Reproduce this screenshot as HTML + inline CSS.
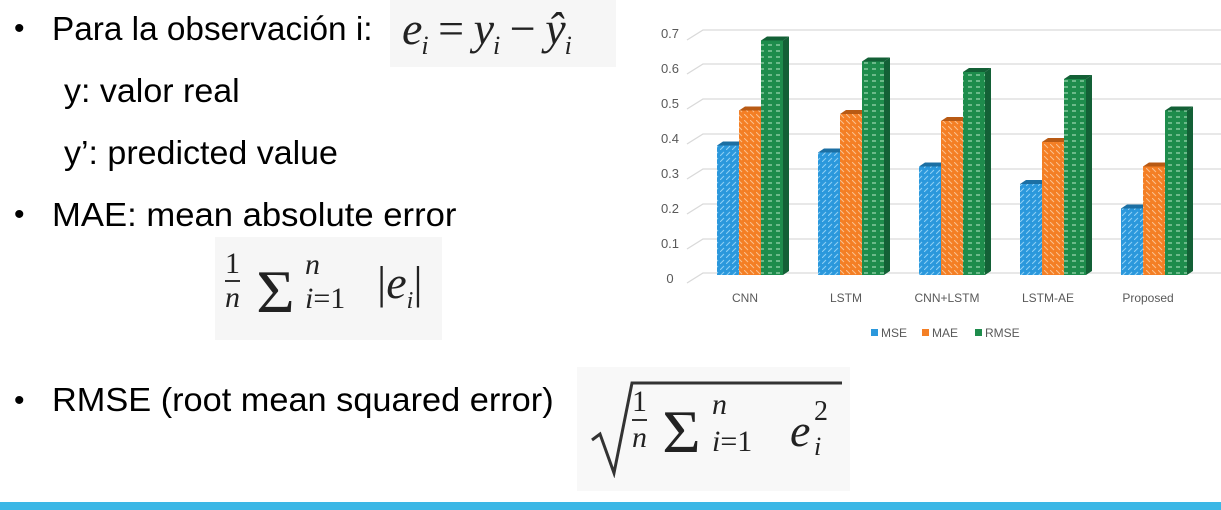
<!DOCTYPE html>
<html><head><meta charset="utf-8"><style>
body{margin:0;width:1221px;height:510px;background:#fff;position:relative;overflow:hidden;font-family:"Liberation Sans",sans-serif;color:#000}
.t{position:absolute;font-size:33px;white-space:nowrap;line-height:1;transform:scaleX(1.03);transform-origin:left top}
.b{position:absolute;font-size:30px;line-height:1}
.box{position:absolute;background:#f6f6f6}
.m{position:absolute;font-family:"Liberation Serif",serif;font-style:italic;white-space:nowrap;color:#222;line-height:1}
</style></head><body>
<div class="b" style="left:14px;top:14px">•</div>
<div class="t" style="left:52px;top:12px;transform:scaleX(1.01)">Para la observación i:</div>
<div class="t" style="left:64px;top:74px">y: valor real</div>
<div class="t" style="left:64px;top:136px">y’: predicted value</div>
<div class="b" style="left:14px;top:200px">•</div>
<div class="t" style="left:52px;top:198px;transform:scaleX(1.05)">MAE: mean absolute error</div>
<div class="b" style="left:14px;top:386px">•</div>
<div class="t" style="left:52px;top:383px;transform:scaleX(1.04)">RMSE (root mean squared error)</div>

<div class="box" style="left:390px;top:0;width:226px;height:67px"></div>
<div class="m" style="left:402px;top:6px;font-size:46px;letter-spacing:-1px">e<sub style="font-size:26px">i</sub> <span style="font-style:normal">=</span> y<sub style="font-size:26px">i</sub> <span style="font-style:normal">−</span> ŷ<sub style="font-size:26px">i</sub></div>

<div class="box" style="left:215px;top:237px;width:227px;height:103px"></div>
<div class="m" style="left:225px;top:248px;font-size:30px;text-align:center;line-height:32px;font-style:normal">1<br><span style="border-top:2px solid #333;display:inline-block;font-style:italic">n</span></div>
<div class="m" style="left:258px;top:262px;font-size:60px;font-style:normal;transform:scaleX(1.1)">Σ</div>
<div class="m" style="left:305px;top:250px;font-size:30px">n</div>
<div class="m" style="left:305px;top:284px;font-size:30px">i<span style="font-style:normal">=1</span></div>
<div class="m" style="left:377px;top:260px;font-size:46px"><span style="font-style:normal">|</span>e<sub style="font-size:24px">i</sub><span style="font-style:normal">|</span></div>

<div class="box" style="left:577px;top:367px;width:273px;height:124px;background:#f8f8f8"></div>
<svg style="position:absolute;left:590px;top:378px" width="260" height="100"><path d="M2 62 L10 56 L24 95 L42 5 L252 5" fill="none" stroke="#333" stroke-width="3"/></svg>
<div class="m" style="left:632px;top:385px;font-size:30px;text-align:center;line-height:34px;font-style:normal">1<br><span style="border-top:2px solid #333;display:inline-block;font-style:italic">n</span></div>
<div class="m" style="left:664px;top:402px;font-size:60px;font-style:normal;transform:scaleX(1.1)">Σ</div>
<div class="m" style="left:712px;top:390px;font-size:30px">n</div>
<div class="m" style="left:712px;top:427px;font-size:30px">i<span style="font-style:normal">=1</span></div>
<div class="m" style="left:790px;top:408px;font-size:46px">e</div>
<div class="m" style="left:814px;top:398px;font-size:28px;font-style:normal">2</div>
<div class="m" style="left:814px;top:434px;font-size:26px">i</div>

<svg style="position:absolute;left:630px;top:0" width="591" height="350">
<defs>
<pattern id="pb" width="6" height="6" patternUnits="userSpaceOnUse"><rect width="6" height="6" fill="#2b98dc"/><path d="M0 6 L4 2" stroke="#8fd0f5" stroke-width="1"/></pattern>
<pattern id="po" width="6" height="6" patternUnits="userSpaceOnUse"><rect width="6" height="6" fill="#f47f25"/><path d="M0 0 L4 4" stroke="#fbc08e" stroke-width="1"/></pattern>
<pattern id="pg" width="8" height="6" patternUnits="userSpaceOnUse"><rect width="8" height="6" fill="#1e8c4c"/><path d="M2 3 H6" stroke="#9fd9b4" stroke-width="1.2"/></pattern>
</defs>
<g stroke="#d9d9d9" stroke-width="1.3" fill="none">
<path d="M57 283 L73 273 H591"/><path d="M57 249 L73 239 H591"/><path d="M57 214 L73 204 H591"/><path d="M57 179 L73 169 H591"/><path d="M57 144 L73 134 H591"/><path d="M57 109 L73 99 H591"/><path d="M57 74 L73 64 H591"/><path d="M57 40 L73 30 H591"/>
</g>
<g font-family="Liberation Sans,sans-serif" font-size="13" fill="#595959" text-anchor="middle">
<text x="40" y="283">0</text><text x="40" y="248">0.1</text><text x="40" y="213">0.2</text><text x="40" y="178">0.3</text><text x="40" y="143">0.4</text><text x="40" y="108">0.5</text><text x="40" y="73">0.6</text><text x="40" y="38">0.7</text>
<text x="115" y="302" font-size="12">CNN</text><text x="216" y="302" font-size="12">LSTM</text><text x="317" y="302" font-size="12">CNN+LSTM</text><text x="418" y="302" font-size="12">LSTM-AE</text><text x="518" y="302" font-size="12">Proposed</text>
</g>
<rect x="87" y="145.5" width="22" height="129.5" fill="url(#pb)"/><polygon points="87,145.5 93,141.5 115,141.5 109,145.5" fill="#1c6fa3"/>
<rect x="109" y="110.5" width="22" height="164.5" fill="url(#po)"/><polygon points="109,110.5 115,106.5 137,106.5 131,110.5" fill="#b85a14"/>
<rect x="131" y="40.5" width="22" height="234.5" fill="url(#pg)"/><polygon points="131,40.5 137,36.5 159,36.5 153,40.5" fill="#136036"/><polygon points="153,40.5 159,36.5 159,271 153,275" fill="#136036"/>
<rect x="188" y="152.5" width="22" height="122.5" fill="url(#pb)"/><polygon points="188,152.5 194,148.5 216,148.5 210,152.5" fill="#1c6fa3"/>
<rect x="210" y="114" width="22" height="161" fill="url(#po)"/><polygon points="210,114 216,110 238,110 232,114" fill="#b85a14"/>
<rect x="232" y="61.5" width="22" height="213.5" fill="url(#pg)"/><polygon points="232,61.5 238,57.5 260,57.5 254,61.5" fill="#136036"/><polygon points="254,61.5 260,57.5 260,271 254,275" fill="#136036"/>
<rect x="289" y="166.5" width="22" height="108.5" fill="url(#pb)"/><polygon points="289,166.5 295,162.5 317,162.5 311,166.5" fill="#1c6fa3"/>
<rect x="311" y="121" width="22" height="154" fill="url(#po)"/><polygon points="311,121 317,117 339,117 333,121" fill="#b85a14"/>
<rect x="333" y="72" width="22" height="203" fill="url(#pg)"/><polygon points="333,72 339,68 361,68 355,72" fill="#136036"/><polygon points="355,72 361,68 361,271 355,275" fill="#136036"/>
<rect x="390" y="184" width="22" height="91" fill="url(#pb)"/><polygon points="390,184 396,180 418,180 412,184" fill="#1c6fa3"/>
<rect x="412" y="142" width="22" height="133" fill="url(#po)"/><polygon points="412,142 418,138 440,138 434,142" fill="#b85a14"/>
<rect x="434" y="79" width="22" height="196" fill="url(#pg)"/><polygon points="434,79 440,75 462,75 456,79" fill="#136036"/><polygon points="456,79 462,75 462,271 456,275" fill="#136036"/>
<rect x="491" y="208.5" width="22" height="66.5" fill="url(#pb)"/><polygon points="491,208.5 497,204.5 519,204.5 513,208.5" fill="#1c6fa3"/>
<rect x="513" y="166.5" width="22" height="108.5" fill="url(#po)"/><polygon points="513,166.5 519,162.5 541,162.5 535,166.5" fill="#b85a14"/>
<rect x="535" y="110.5" width="22" height="164.5" fill="url(#pg)"/><polygon points="535,110.5 541,106.5 563,106.5 557,110.5" fill="#136036"/><polygon points="557,110.5 563,106.5 563,271 557,275" fill="#136036"/>
<g font-family="Liberation Sans,sans-serif" font-size="12" fill="#595959">
<rect x="241" y="329" width="7" height="7" fill="#2b98dc"/><text x="251" y="337">MSE</text>
<rect x="292" y="329" width="7" height="7" fill="#f47f25"/><text x="302" y="337">MAE</text>
<rect x="345" y="329" width="7" height="7" fill="#1e8c4c"/><text x="355" y="337">RMSE</text>
</g>
</svg>
<div style="position:absolute;left:0;top:502px;width:1221px;height:8px;background:#3bb7e6"></div>
</body></html>
